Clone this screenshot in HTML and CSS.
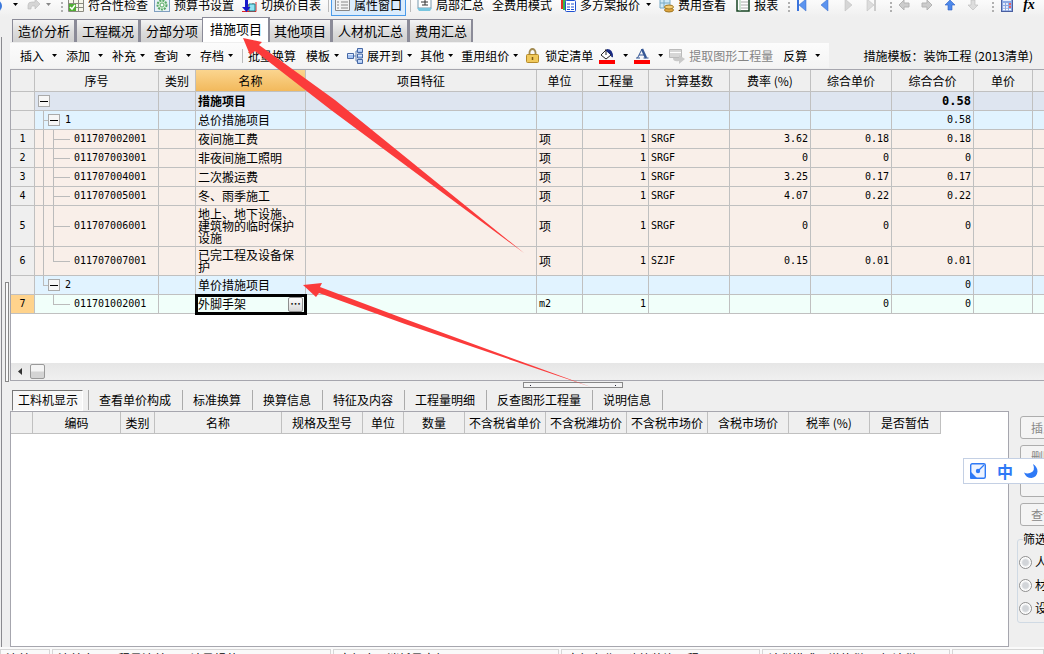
FILE: index.html
```html
<!DOCTYPE html>
<html lang="zh-CN">
<head>
<meta charset="utf-8">
<title>措施项目</title>
<link rel="stylesheet" href="styles.css">
</head>
<body>
<div class="app">
  <header class="topbar">
    <svg class="ico-half" width="3" height="16"><circle cx="-4" cy="9" r="6" fill="#3b78dc"/></svg>
    <button class="caret gap-l10" aria-label="撤销列表"></button>
    <button class="icon gap-l8" aria-label="恢复"><svg width="14" height="16" viewBox="0 0 14 16"><path d="M2 12V8Q2 5 6 5H9V2l5 5-5 5V9H6Q5 9 5 12Z" fill="#d5d5d5" stroke="#bbb" stroke-width=".6"/></svg></button>
    <button class="caret caret-off gap-l6" aria-label="恢复列表"></button>
    <i class="grip gap-l10"></i>
    <button class="tool gap-l5"><svg width="16" height="16"><path d="M.5 2.500h15v12H.5zM.5 6.500h15M.5 10.500h15M5.500 2v12M10.500 2v12" fill="#f6f6ea" stroke="#8a8a80"/><path d="M1 7h7v7H1z" fill="#4fae32"/><path d="M2 10l2 2 3-4" stroke="#fff" fill="none" stroke-width="1.500"/></svg>符合性检查</button>
    <button class="tool gap-l6"><svg width="16" height="16"><rect x=".5" y=".5" width="15" height="14" fill="#e8f1f6" stroke="#7f9fc0"/><circle cx="8" cy="8" r="4.500" fill="#d8f0d8" stroke="#58a868" stroke-width="2" stroke-dasharray="2 1"/><circle cx="8" cy="8" r="2" fill="#fff" stroke="#58a868"/></svg>预算书设置</button>
    <button class="tool gap-l7"><svg width="16" height="16"><path d="M1 14.500H15V5M7 14V8h3v6M12 14V6" fill="none" stroke="#e02424"/><path d="M8 7h6v7H8z" fill="#8fe3f2" stroke="#12828f"/><path d="M4 1v9H1l4.500 5 4-5H7V1z" fill="#1717c9"/></svg>切换价目表</button>
    <i class="sep gap-l7"></i>
    <button class="tool tool-on"><svg width="15" height="16"><path d="M.5 1.500h14v12H.5z" fill="#f4f4f4" stroke="#888"/><path d="M2 5h2M6 5h7M2 8h2M6 8h7M2 11h2M6 11h7" stroke="#888"/></svg>属性窗口</button>
    <i class="sep gap-l4"></i>
    <button class="tool gap-l6"><svg width="15" height="16"><path d="M1 1h13v10H1z" fill="#fff" stroke="#7899ad"/><path d="M4 5h7M8 3v5M5 8h6" stroke="#333"/><path d="M0 11h15l-2 3H2z" fill="#79c6df"/></svg>局部汇总</button>
    <button class="tool gap-l8">全费用模式</button>
    <button class="tool gap-l8"><svg width="16" height="16"><path d="M1 1h3v11H1z" fill="#df3225"/><path d="M3 1h3v12H3z" fill="#39b54a"/><rect x="5.500" y="3.500" width="10" height="11" rx="1" fill="#fff" stroke="#1e50d2"/><path d="M7 7h3M11 7h3M7 10h3M11 10h3M7 12.500h3M11 12.500h3" stroke="#1e50d2"/></svg>多方案报价</button>
    <button class="caret gap-l6" aria-label="多方案报价列表"></button>
    <button class="tool gap-l8"><svg width="15" height="16"><path d="M1 2h10v9H1z" fill="#cfe9f7" stroke="#76a9c5"/><path d="M1 6h10M5 2v9" stroke="#76a9c5"/><ellipse cx="10" cy="13" rx="4.500" ry="2" fill="#dfa640" stroke="#9f7623"/><ellipse cx="10" cy="10" rx="4.500" ry="2" fill="#f4cd74" stroke="#9f7623"/></svg>费用查看</button>
    <button class="tool gap-l10"><svg width="14" height="16"><rect x="1" y="1" width="12" height="13" fill="#fff" stroke="#174423" stroke-width="1.500"/><path d="M4 1v13" stroke="#9bc7a5"/><path d="M5 5h7M5 8h7M5 11h7" stroke="#aaa"/></svg>报表</button>
    <i class="grip gap-l10"></i>
    <div class="nav">
      <button class="icon" aria-label="首条"><svg width="12" height="14"><path d="M2 1v12" stroke="#3a74dd" stroke-width="2"/><path d="M10 1v12L3 7z" fill="#5c94ef" stroke="#3568c8" stroke-width=".5"/></svg></button>
      <button class="icon" aria-label="上一条"><svg width="12" height="14"><path d="M9 1v12L2 7z" fill="#5c94ef" stroke="#3568c8" stroke-width=".5"/></svg></button>
      <button class="icon" aria-label="下一条"><svg width="12" height="14"><path d="M3 1v12l7-6z" fill="#d6d6d6" stroke="#bbb" stroke-width=".5"/></svg></button>
      <button class="icon" aria-label="末条"><svg width="12" height="14"><path d="M10 1v12" stroke="#ccc" stroke-width="2"/><path d="M2 1v12l7-6z" fill="#ddd" stroke="#bbb" stroke-width=".5"/></svg></button>
    </div>
    <i class="grip gap-l13"></i>
    <div class="nav">
      <button class="icon" aria-label="左移"><svg width="12" height="14"><path d="M1 7l5-5v3h5v4H6v3z" fill="#ccc" stroke="#b4b4b4"/></svg></button>
      <button class="icon" aria-label="右移"><svg width="12" height="14"><path d="M11 7L6 2v3H1v4h5v3z" fill="#ccc" stroke="#b4b4b4"/></svg></button>
      <button class="icon" aria-label="上移"><svg width="12" height="14"><path d="M6 2l5 5H8v5H4V7H1z" fill="#4d88ea" stroke="#2e5fc2" stroke-width=".6"/></svg></button>
      <button class="icon" aria-label="下移"><svg width="12" height="14"><path d="M6 12l5-5H8V2H4v5H1z" fill="#ddd" stroke="#bbb" stroke-width=".6"/></svg></button>
    </div>
    <i class="grip gap-l13"></i>
    <button class="icon gap-l7" aria-label="计算器"><svg width="12" height="16"><rect x=".5" y=".5" width="11" height="14" fill="#8ba9e4" stroke="#4a5fa0"/><path d="M2 3h8" stroke="#e8eefc" stroke-width="2"/><path d="M2 7h8M2 10h8M2 12.500h8" stroke="#fff" stroke-width="1.500" stroke-dasharray="2 1"/><path d="M8 7h2M8 10h2" stroke="#e33" stroke-width="1.500"/></svg></button>
    <button class="icon fx gap-l10" aria-label="函数">fx</button>
  </header>

  <div class="body">
    <aside class="rail"><div class="rail-handle"></div></aside>
    <main class="main">
      <nav class="tabs">
        <button>造价分析</button><button>工程概况</button><button>分部分项</button><button class="tab-on">措施项目</button><button>其他项目</button><button>人材机汇总</button><button>费用汇总</button>
      </nav>

      <div class="toolrow">
        <div class="toolbar">
          <button class="drop wide">插入</button>
          <button class="drop wide">添加</button>
          <button class="drop">补充</button>
          <button class="drop wide">查询</button>
          <button class="drop">存档</button>
          <i class="sep"></i>
          <button class="tool gap-l5">批量换算</button>
          <button class="drop near gap-l10">模板</button>
          <button class="drop near"><svg width="16" height="16"><path d="M5 8h4M9 3v10M9 3h2M9 13h2" stroke="#6382b4" fill="none"/><path d="M.5 5.500h6v5h-6zM10.500.5h5v4h-5zM10.500 6h5v4h-5zM10.500 11.500h5v4h-5z" fill="#a6c4f2" stroke="#4668a5"/><path d="M1 6.500h5M11 2h4M11 7.500h4M11 13h4" stroke="#dfeafc"/></svg>展开到</button>
          <button class="drop near">其他</button>
          <button class="drop near">重用组价</button>
          <button class="tool gap6"><svg width="13" height="15"><path d="M3.500 8V4.500a3 3.500 0 016 0V8" fill="none" stroke="#a28b51" stroke-width="1.800"/><rect x=".5" y="6.500" width="12" height="8" rx="1" fill="#f1c95b" stroke="#b58a2a"/><path d="M6.500 9v3" stroke="#805b12" stroke-width="1.500"/></svg>锁定清单</button>
          <button class="drop wide swatch gap-l6" aria-label="填充颜色"><svg width="16" height="16"><path d="M2 7l5-5 5 5-5 4z" fill="#fff" stroke="#222"/><path d="M7 1v6" stroke="#222"/><path d="M8 1q6 0 6 8-2 1-2-2l-5-4z" fill="#182a83"/><path d="M0 12h16v4H0z" fill="red"/></svg></button>
          <button class="drop wide swatch" aria-label="字体颜色"><svg width="16" height="16"><path d="M3.500 10L8 1" stroke="#355795" fill="none"/><path d="M8 1l4 9" stroke="#355795" stroke-width="2.400"/><path d="M5 7h5M2 10h4M9.500 10h5" stroke="#355795"/><path d="M0 12h16v4H0z" fill="red"/></svg></button>
          <button class="tool" disabled><svg width="16" height="16"><path d="M.5 1.500h12v8H.5z" fill="#d7d7d7" stroke="#bbb"/><path d="M1 4.500h11" stroke="#fff"/><path d="M4 10q0 4 6 3v3l6-5-6-4v3z" fill="#c9c9c9"/></svg>提取图形工程量</button>
          <button class="drop wide gap-l10">反算</button>
        </div>
        <span class="template">措施模板：装饰工程 (2013清单)</span>
      </div>

      <section class="upper">
        <div class="gridview">
          <table class="grid">
            <colgroup><col class="w24"><col class="w124"><col class="w37"><col class="w110"><col class="w231"><col class="w46"><col class="w66"><col class="w81"><col class="w81"><col class="w81"><col class="w82"><col class="w59"><col class="w66"></colgroup>
            <thead><tr><th></th><th>序号</th><th>类别</th><th class="th-on">名称</th><th>项目特征</th><th>单位</th><th>工程量</th><th>计算基数</th><th>费率 (%)</th><th>综合单价</th><th>综合合价</th><th>单价</th><th>管理费</th></tr></thead>
            <tbody>
              <tr class="r-root"><th></th><td class="t-root"><button class="toggle" aria-label="折叠"></button></td><td></td><td>措施项目</td><td></td><td></td><td></td><td></td><td></td><td></td><td class="n">0.58</td><td></td><td></td></tr>
              <tr class="r-group"><th></th><td class="t-group t-mid"><button class="toggle" aria-label="折叠"></button>1</td><td></td><td>总价措施项目</td><td></td><td></td><td></td><td></td><td></td><td></td><td class="n">0.58</td><td></td><td></td></tr>
              <tr><th>1</th><td class="t-leaf">011707002001</td><td></td><td>夜间施工费</td><td></td><td>项</td><td class="n">1</td><td class="m">SRGF</td><td class="n">3.62</td><td class="n">0.18</td><td class="n">0.18</td><td></td><td></td></tr>
              <tr><th>2</th><td class="t-leaf">011707003001</td><td></td><td>非夜间施工照明</td><td></td><td>项</td><td class="n">1</td><td class="m">SRGF</td><td class="n">0</td><td class="n">0</td><td class="n">0</td><td></td><td></td></tr>
              <tr><th>3</th><td class="t-leaf">011707004001</td><td></td><td>二次搬运费</td><td></td><td>项</td><td class="n">1</td><td class="m">SRGF</td><td class="n">3.25</td><td class="n">0.17</td><td class="n">0.17</td><td></td><td></td></tr>
              <tr><th>4</th><td class="t-leaf">011707005001</td><td></td><td>冬、雨季施工</td><td></td><td>项</td><td class="n">1</td><td class="m">SRGF</td><td class="n">4.07</td><td class="n">0.22</td><td class="n">0.22</td><td></td><td></td></tr>
              <tr class="h3"><th>5</th><td class="t-leaf">011707006001</td><td></td><td>地上、地下设施、<br>建筑物的临时保护<br>设施</td><td></td><td>项</td><td class="n">1</td><td class="m">SRGF</td><td class="n">0</td><td class="n">0</td><td class="n">0</td><td></td><td></td></tr>
              <tr class="h2"><th>6</th><td class="t-leaf t-last">011707007001</td><td></td><td>已完工程及设备保<br>护</td><td></td><td>项</td><td class="n">1</td><td class="m">SZJF</td><td class="n">0.15</td><td class="n">0.01</td><td class="n">0.01</td><td></td><td></td></tr>
              <tr class="r-group"><th></th><td class="t-group t-end"><button class="toggle" aria-label="折叠"></button>2</td><td></td><td>单价措施项目</td><td></td><td></td><td></td><td></td><td></td><td></td><td class="n">0</td><td></td><td></td></tr>
              <tr class="r-sel"><th>7</th><td class="t-leaf t-only">011701002001</td><td></td><td class="editing"><div class="editor"><span>外脚手架</span><button class="more" aria-label="更多">•••</button></div></td><td></td><td class="m">m2</td><td class="n">1</td><td></td><td></td><td class="n">0</td><td class="n">0</td><td></td><td></td></tr>
            </tbody>
          </table>
        </div>
        <div class="hscroll"><button class="left" aria-label="向左滚动"></button><div class="thumb"></div></div>
      </section>

      <div class="gutter"><div class="gutter-handle"></div></div>

      <nav class="subtabs">
        <button class="sub-on">工料机显示</button><button>查看单价构成</button><button>标准换算</button><button>换算信息</button><button>特征及内容</button><button>工程量明细</button><button>反查图形工程量</button><button>说明信息</button>
      </nav>

      <div class="lower">
        <section class="detail">
          <table class="grid">
            <colgroup><col class="w22"><col class="w88"><col class="w34"><col class="w127"><col class="w81"><col class="w41"><col class="w61"><col class="w81"><col class="w81"><col class="w81"><col class="w81"><col class="w81"><col class="w71"></colgroup>
            <thead><tr><th></th><th>编码</th><th>类别</th><th>名称</th><th>规格及型号</th><th>单位</th><th>数量</th><th>不含税省单价</th><th>不含税潍坊价</th><th>不含税市场价</th><th>含税市场价</th><th>税率 (%)</th><th>是否暂估</th></tr></thead>
          </table>
        </section>
        <aside class="side">
          <button disabled>插入</button>
          <button disabled>删除</button>
          <button disabled class="tight"></button>
          <button disabled>查询</button>
          <fieldset>
            <legend>筛选条件</legend>
            <label><input type="radio" name="f">人工</label>
            <label><input type="radio" name="f">材料</label>
            <label><input type="radio" name="f">设备</label>
          </fieldset>
        </aside>
      </div>
    </main>
  </div>

  <footer class="status">
    <span class="s50">清单</span><span class="s279">清单库：工程量清单项目计量规范(2013)</span><span class="s226">定额库：消耗量定额(2016)</span><span class="s199">定额专业：建筑装饰工程</span><span class="s188">计税模式：增值税(一般计税)</span><span class="fill"></span>
  </footer>

  <div class="ime">
    <svg width="16" height="16"><rect x=".7" y=".7" width="14.600" height="14.600" rx="1.500" fill="#edf3ff" stroke="#2e79f6" stroke-width="1.400"/><path d="M8 8l6-6" stroke="#2e79f6" stroke-width="1.300"/><circle cx="8" cy="8" r="2.200" fill="#2e79f6"/><path d="M0 8l8 8H1q-1 0-1-1z" fill="#2e79f6"/></svg>
    <b>中</b>
    <svg width="14" height="14"><path d="M9 0q3 7-3 9Q3 10 0 8.500 2 14 7.500 14 13 13 13.500 7.500 13.500 3 9 0z" fill="#2e79f6"/></svg>
  </div>

  <svg class="arrows" width="1044" height="654" fill="#fb3b3b">
    <path d="M243 38l19 4-3 3 76 55L524 253 331 110 255 51l-5 4z"/>
    <path d="M303 285l19-2-2 4 85 32L591 387 405 324 319 293l-3 4z"/>
  </svg>
</div>
</body>
</html>
```
FILE: styles.css
```css
* { box-sizing: border-box; }
body {
  margin: 0;
  font: 12px/16px "Noto Sans CJK SC", sans-serif;
  color: #000;
  background: #efefef;
}
button {
  font: inherit;
  color: inherit;
  border: 0;
  padding: 0;
  margin: 0;
  background: none;
  white-space: nowrap;
}
svg { display: block; flex: none; }
.app {
  position: relative;
  display: flex;
  flex-direction: column;
  height: 100vh;
  overflow: hidden;
}

/* top toolbar */
.topbar {
  display: flex;
  align-items: center;
  height: 25px;
  margin-top: -8px;
  flex: none;
  background: linear-gradient(#fff, #fafafa 40%, #efefef);
}
.topbar > * { flex: none; }
.tool, .drop { display: flex; align-items: center; gap: 4px; }
.tool:disabled { color: #858585; }
.tool.gap6 { gap: 6px; }
.tool-on { border: 1px solid #4a9bea; background: #dbecfc; padding: 0 3px; margin-left: 2px; height: 22px; }
.gap-l4 { margin-left: 4px; }
.gap-l5 { margin-left: 5px; }
.gap-l6 { margin-left: 6px; }
.gap-l7 { margin-left: 7px; }
.gap-l8 { margin-left: 8px; }
.gap-l10 { margin-left: 10px; }
.gap-l13 { margin-left: 13px; }
.caret, .drop::after {
  content: "";
  width: 5px;
  height: 3px;
  background: #000;
  clip-path: polygon(0 0, 100% 0, 50% 100%);
}
.caret-off { background: #888; }
.sep { width: 1px; height: 14px; background: #bbb; }
.grip { width: 2px; height: 14px; background: repeating-linear-gradient(#b0b0b0 0 2px, transparent 2px 4px); }
.nav { display: flex; gap: 11px; margin-left: 6px; }
.fx { font: italic bold 14px/16px "Liberation Serif", serif; }

/* frame */
.body { display: flex; flex: 1; min-height: 0; }
.rail {
  display: flex;
  align-items: center;
  width: 10px;
  flex: none;
  padding-left: 5px;
  background: linear-gradient(#8a8a8f, #8a8a8f) 1px 20px / 1px 100% no-repeat;
}
.rail-handle { width: 4px; height: 100px; border: 1px solid #888; background: #fafafa; }
.main { display: flex; flex-direction: column; flex: 1; min-width: 0; }

.tabs { display: flex; align-items: flex-end; flex: none; height: 25px; padding-left: 2px; }
.tabs button {
  height: 23px;
  padding: 0 4px 0 5px;
  font-size: 13px;
  border: 1px solid #8b8b98;
  border-bottom: 0;
  border-right-width: 2px;
  background: linear-gradient(#f4f4f4, #dcdcdc 55%, #d0d0d0);
}
.tabs .tab-on { position: relative; height: 25px; margin: 0 -2px; padding: 0 6px 3px 7px; background: #fff; }

.toolrow {
  display: flex;
  align-items: center;
  justify-content: space-between;
  flex: none;
  height: 27px;
  padding-right: 11px;
}
.toolbar {
  display: flex;
  align-items: center;
  height: 25px;
  padding-left: 10px;
  background: linear-gradient(#fcfcfc, #f4f4f4);
}
.toolbar > * { flex: none; }
.drop { margin-right: 9px; }
.drop.near { margin-right: 8px; }
.drop.swatch { margin-right: 6px; }
.drop.wide::after { margin-left: 4px; }
.template { white-space: nowrap; }

/* grids */
.upper {
  display: flex;
  flex-direction: column;
  flex: 1 1 312px;
  min-height: 0;
  border: 1px solid #a6a6ae;
  border-right: 0;
  background: #fff;
}
.gridview { flex: 1; min-height: 0; overflow: hidden; }
.grid { table-layout: fixed; border-collapse: separate; border-spacing: 0; width: 0; }
.grid th, .grid td {
  padding: 0 2px;
  height: 19px;
  line-height: 12px;
  border-right: 1px solid #c0c0c0;
  border-bottom: 1px solid #c0c0c0;
  white-space: nowrap;
  font-weight: normal;
  text-align: left;
  vertical-align: middle;
}
.grid th { background-color: #efefef; text-align: center; padding: 0; }
.grid thead th { height: 22px; line-height: 16px; }
.grid thead .th-on { background: linear-gradient(#fbd58f, #f2b95c); }
.grid td { background-color: #f9efe9; }
.grid tbody th, .grid .n, .grid .m, .t-leaf, .t-group {
  font-family: "DejaVu Sans Mono", monospace;
  font-size: 10px;
}
.grid .n { text-align: right; }
.grid .r-root td { background-color: #dee5f0; font-weight: bold; }
.grid .r-root .n { font-size: 12px; }
.grid .r-group td { background-color: #e1f3ff; }
.grid .r-sel td { background-color: #f1fffa; }
.grid .r-sel th { background-color: #ffd38c; }
.grid .h3 td { height: 41px; }
.grid .h2 td { height: 29px; }

/* tree guides */
.grid .t-leaf {
  padding-left: 39px;
  background-image: linear-gradient(#bbb, #bbb), linear-gradient(#bbb, #bbb), linear-gradient(#bbb, #bbb);
  background-repeat: no-repeat;
  background-position: 8px 0, 18px 0, 18px 50%;
  background-size: 1px 100%, 1px 100%, 17px 1px;
}
.grid .t-last { background-size: 1px 100%, 1px 50%, 17px 1px; }
.grid .t-only { background-size: 0 0, 1px 50%, 17px 1px; }
.grid .t-root { padding-left: 3px; }
.grid .t-group {
  padding-left: 13px;
  background-image: linear-gradient(#bbb, #bbb), linear-gradient(#bbb, #bbb);
  background-repeat: no-repeat;
  background-position: 8px 0, 8px 50%;
  background-size: 1px 100%, 6px 1px;
}
.grid .t-end { background-size: 1px 50%, 6px 1px; }
.toggle {
  width: 12px;
  height: 12px;
  margin-right: 5px;
  vertical-align: middle;
  border: 1px solid #aaa;
  background: linear-gradient(#000, #000) center / 8px 1px no-repeat, #f6f6f6;
}
.t-root .toggle { display: block; }
.grid .editing { background-color: #d7effb; outline: 3px solid #000; outline-offset: -2px; }
.editor { display: flex; align-items: center; justify-content: space-between; }
.more {
  width: 15px;
  height: 15px;
  font: 6px/12px "DejaVu Sans", sans-serif;
  border: 1px solid #8e8e8e;
  border-radius: 2px;
  background: linear-gradient(#fdfdfd, #d8d8d8);
}

.w22 { width: 22px; } .w24 { width: 24px; } .w34 { width: 34px; } .w37 { width: 37px; }
.w41 { width: 41px; } .w46 { width: 46px; } .w59 { width: 59px; } .w61 { width: 61px; }
.w66 { width: 66px; } .w71 { width: 71px; } .w81 { width: 81px; } .w82 { width: 82px; }
.w88 { width: 88px; } .w110 { width: 110px; } .w124 { width: 124px; } .w127 { width: 127px; }
.w231 { width: 231px; }

.hscroll { display: flex; align-items: center; gap: 8px; flex: none; height: 17px; padding-left: 7px; background: linear-gradient(#e6e6e6, #f0f0f0); }
.left { width: 4px; height: 7px; background: #333; clip-path: polygon(100% 0, 100% 100%, 0 50%); }
.thumb { width: 15px; height: 15px; border: 1px solid #999; border-radius: 2px; background: linear-gradient(#f4f4f4 45%, #d4d4d4 55%); }

.gutter { flex: none; height: 8px; padding: 1px 0 0 92px; }
.gutter-handle {
  width: 100px;
  height: 6px;
  margin: 0 auto;
  border: 1px solid #888;
  background:
    linear-gradient(#223, #223) 6px 2px / 1px 1px no-repeat,
    linear-gradient(#223, #223) 91px 2px / 1px 1px no-repeat,
    #f4f4f4;
}

.subtabs { display: flex; align-items: center; flex: none; height: 22px; padding-left: 2px; }
.subtabs button { padding: 0 11px 0 10px; height: 20px; border-right: 1px solid #aaa; }
.subtabs .sub-on {
  height: 21px;
  padding: 0 4px 0 5px;
  margin-right: 5px;
  border: 1px solid #fff;
  border-top-color: #777;
  border-left-color: #777;
  background: #f7f7f7;
}
.subtabs .sub-on + button { border-left: 1px solid #aaa; }

.lower { display: flex; flex: 1 1 236px; min-height: 0; }
.detail { flex: 1; min-width: 0; border: 1px solid #a6a6ae; background: #fff; overflow: hidden; }

.side { display: flex; flex-direction: column; flex: none; width: 35px; padding: 5px 0 0 8px; overflow: hidden; }
.side button {
  flex: none;
  width: 80px;
  height: 23px;
  margin-left: 3px;
  margin-bottom: 6px;
  padding-left: 10px;
  text-align: left;
  color: #888;
  border: 1px solid #adadad;
  border-radius: 3px;
  background: #f4f4f4;
}
.side .tight { margin-top: -6px; height: 29px; }
.side fieldset { display: flex; flex-direction: column; gap: 7px; width: 90px; height: 92px; margin: -1px 0 0; padding: 7px 0 0 1px; border: 1px solid #d0dae4; border-radius: 3px; }
.side legend { padding: 0; margin-left: 4px; }
.side label { display: flex; align-items: center; gap: 3px; white-space: nowrap; }
.side input {
  appearance: none;
  width: 13px;
  height: 13px;
  margin: 0;
  border: 1px solid #8f8f8f;
  border-radius: 50%;
  background: radial-gradient(#d2d5d9 35%, #fff 60%);
}

.status { display: flex; gap: 2px; flex: none; height: 7px; padding-top: 2px; background: #fafafa; overflow: hidden; }
.status span { flex: none; height: 20px; padding: 2px 5px; line-height: 14px; border: 1px solid #d6d6d6; white-space: nowrap; overflow: hidden; }
.s50 { width: 50px; } .s279 { width: 279px; } .s226 { width: 226px; } .s199 { width: 199px; } .s188 { width: 188px; }
.status .fill { flex: 1; }

/* floating layers */
.ime {
  position: absolute;
  right: 0;
  top: 458px;
  display: flex;
  align-items: center;
  gap: 11px;
  height: 26px;
  padding: 0 6px;
  background: #fff;
  border: 1px solid #c4d0e4;
  border-right: 0;
  color: #2e79f6;
}
.ime b { font-size: 16px; }
.arrows { position: absolute; left: 0; top: 0; pointer-events: none; }
```
